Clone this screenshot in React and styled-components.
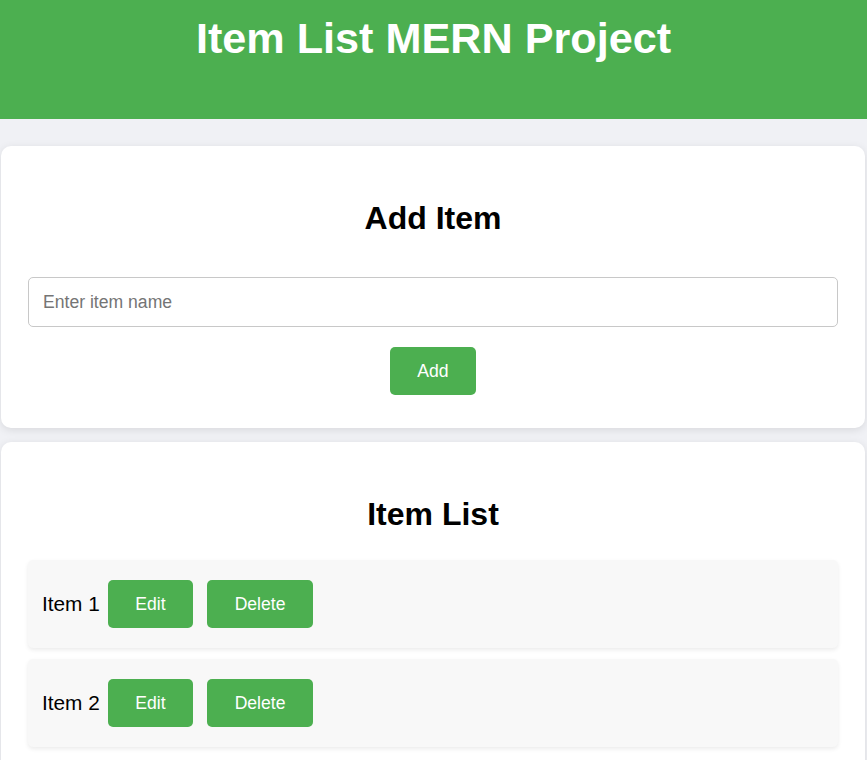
import React from "react";
import styled, { createGlobalStyle } from "styled-components";

const Global = createGlobalStyle`
  html, body { margin: 0; padding: 0; }
  body {
    background: #f0f1f5;
    font-family: "Liberation Sans", Arial, sans-serif;
    color: #000;
  }
`;

const green = "#4caf50";

const Header = styled.header`
  background: ${green};
  height: 119px;
  box-sizing: border-box;
  padding-top: 14px;
  text-align: center;
`;

const Title = styled.h1`
  margin: 0;
  color: #fff;
  font-size: 43.2px;
  font-weight: bold;
  line-height: normal;
`;

const Main = styled.main`
  display: flex;
  flex-direction: column;
  gap: 14px;
  padding: 27px 2px 0 1px;
`;

const Card = styled.section`
  background: #fff;
  border-radius: 10px;
  box-shadow: 0 2px 8px rgba(0, 0, 0, 0.1);
  padding: 54px 27px 33px;
  display: flex;
  flex-direction: column;
  align-items: center;
`;

const CardTitle = styled.h2`
  margin: 0 0 ${(p) => p.$gap}px;
  font-size: 32px;
  font-weight: bold;
  line-height: normal;
  text-align: center;
`;

const Input = styled.input`
  box-sizing: border-box;
  width: 100%;
  height: 50px;
  padding: 0 14px;
  border: 1px solid #c8c8c8;
  border-radius: 5px;
  font-family: inherit;
  font-size: 17.6px;
  outline: none;
  &::placeholder { color: #757575; }
`;

const Button = styled.button`
  height: 48px;
  padding: 0 27.5px;
  margin: ${(p) => p.$margin || 0};
  border: none;
  border-radius: 5px;
  background: ${green};
  color: #fff;
  font-family: inherit;
  font-size: 17.6px;
  cursor: pointer;
`;

const List = styled.ul`
  list-style: none;
  margin: 0;
  padding: 0;
  width: 100%;
  display: flex;
  flex-direction: column;
  gap: 11px;
`;

const Row = styled.li`
  display: flex;
  align-items: center;
  height: 88px;
  box-sizing: border-box;
  padding: 0 14px;
  background: #f8f8f8;
  border-radius: 5px;
  box-shadow: 0 2px 4px rgba(0, 0, 0, 0.08);
`;

const ItemName = styled.span`
  font-size: 20.8px;
  margin-right: 8px;
`;

const items = ["Item 1", "Item 2"];

export default function App() {
  return (
    <>
      <Global />
      <Header>
        <Title>Item List MERN Project</Title>
      </Header>
      <Main>
        <Card>
          <CardTitle $gap={40}>Add Item</CardTitle>
          <Input placeholder="Enter item name" />
          <Button $margin="20px 0 0">Add</Button>
        </Card>
        <Card>
          <CardTitle $gap={27}>Item List</CardTitle>
          <List>
            {items.map((it) => (
              <Row key={it}>
                <ItemName>{it}</ItemName>
                <Button>Edit</Button>
                <Button $margin="0 0 0 14px">Delete</Button>
              </Row>
            ))}
          </List>
        </Card>
      </Main>
    </>
  );
}
